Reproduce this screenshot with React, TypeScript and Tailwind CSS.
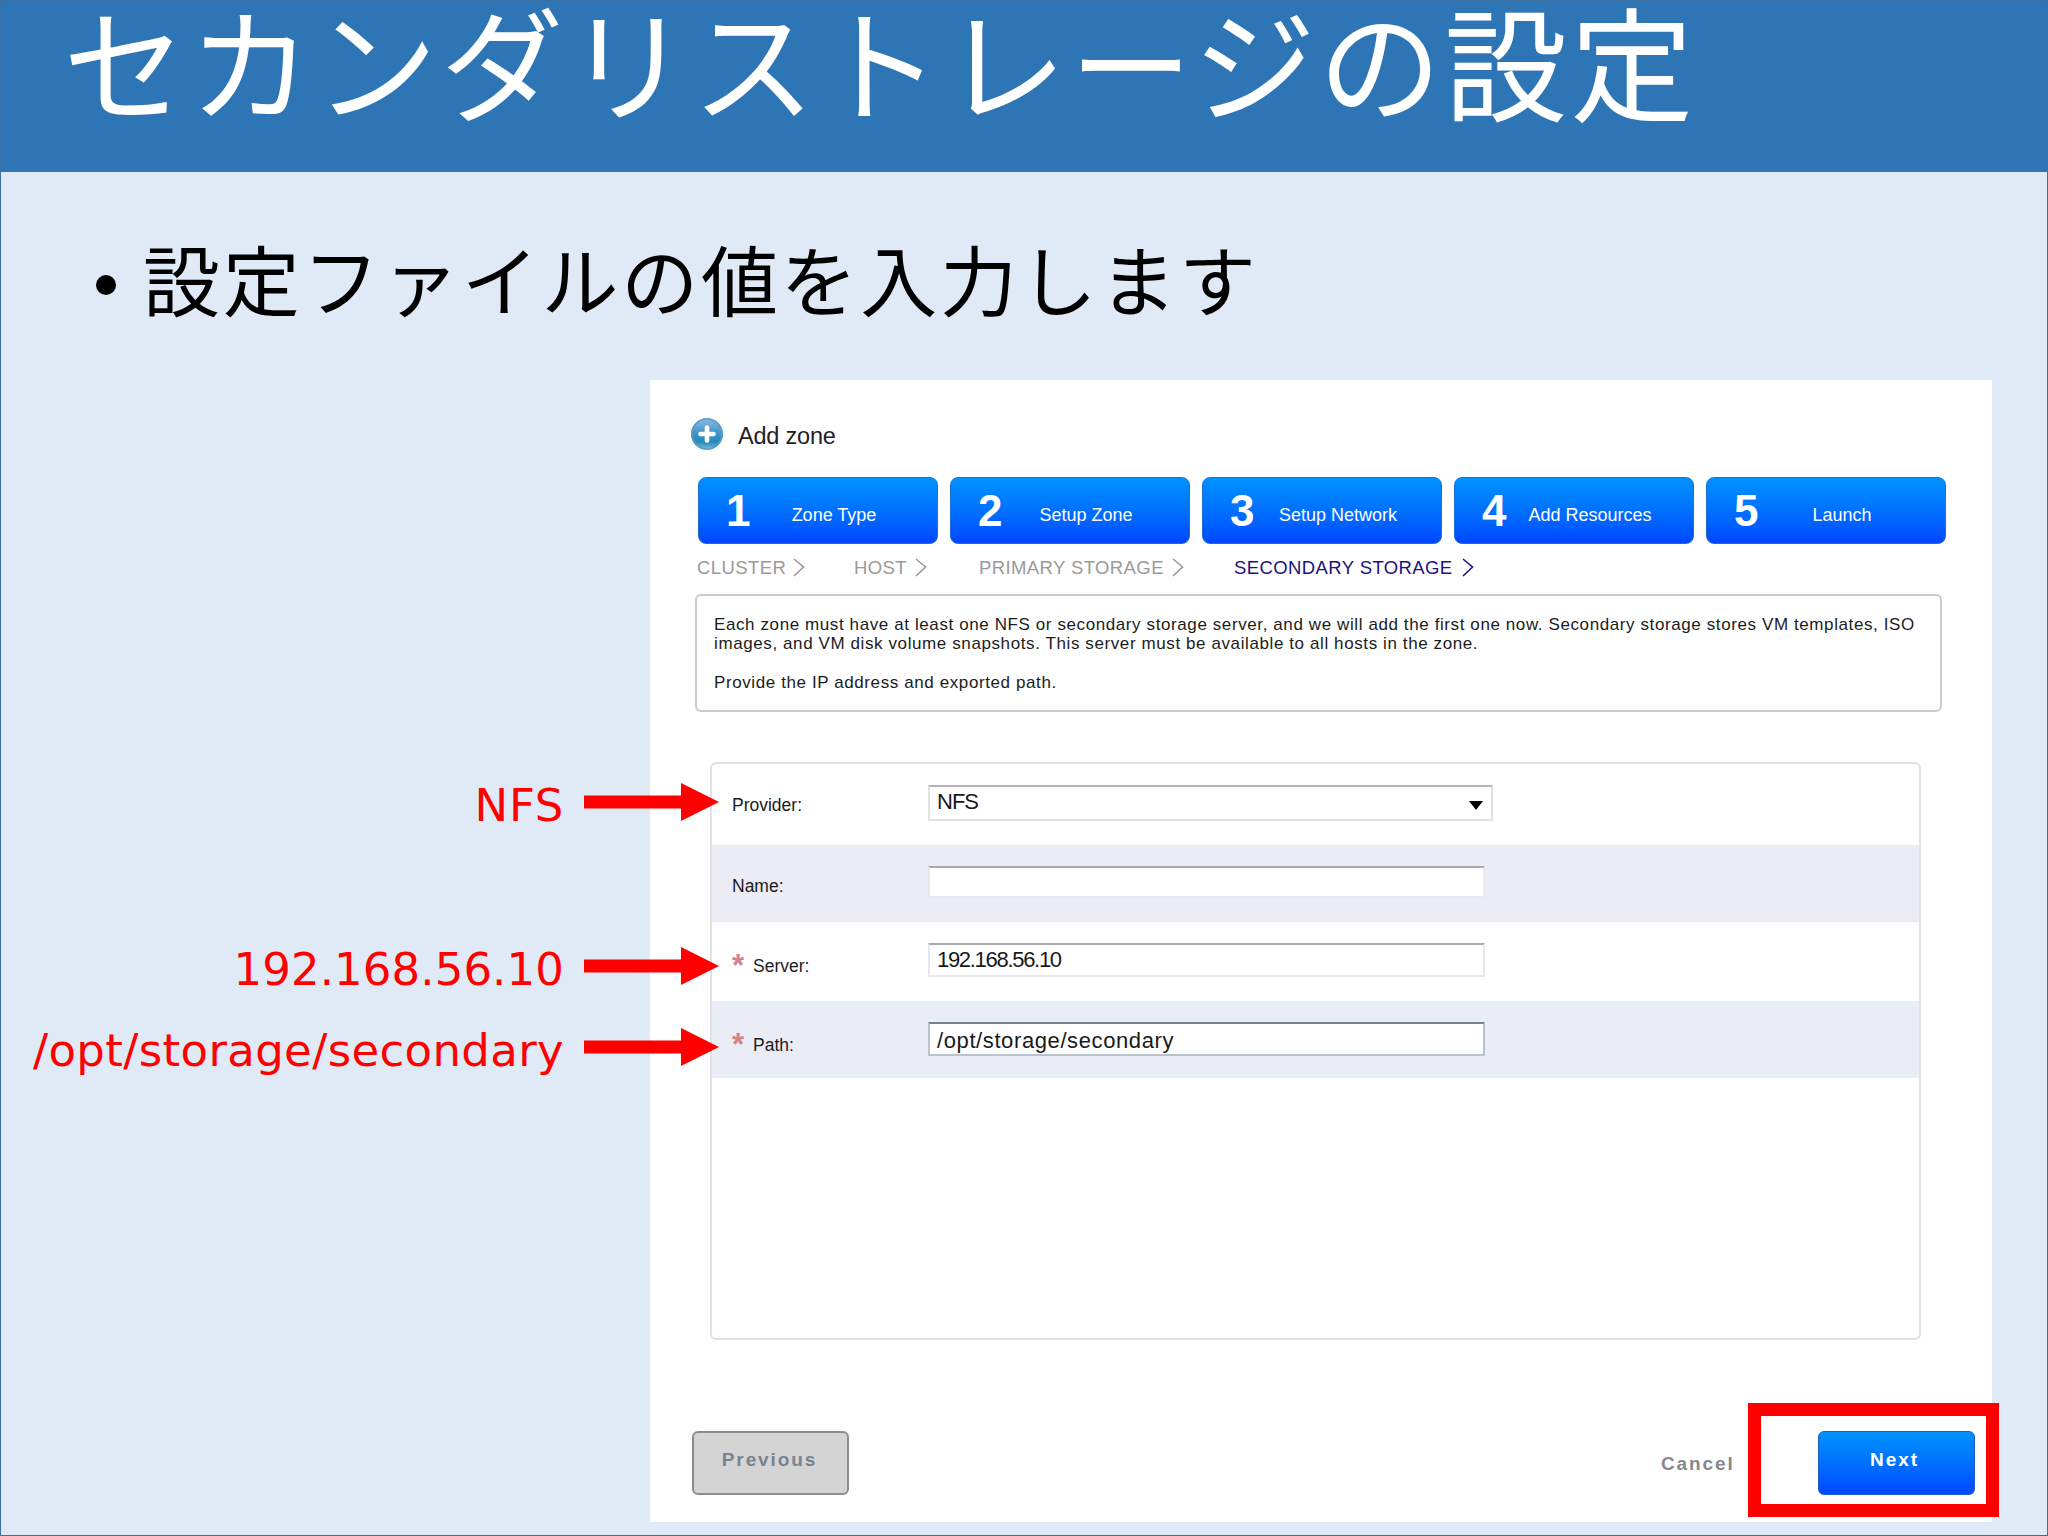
import clsx from "clsx";

type Crumb = {
  label: string;
  width: string;
  gap: string;
  active?: boolean;
};

type Field = {
  label: string;
  value: string;
  rowClass: string;
  inputClass: string;
  required?: boolean;
  select?: boolean;
};

const steps = [
  "Zone Type",
  "Setup Zone",
  "Setup Network",
  "Add Resources",
  "Launch",
];

const crumbs: Crumb[] = [
  { label: "CLUSTER", width: "w-[157px]", gap: "gap-[7px]" },
  { label: "HOST", width: "w-[125px]", gap: "gap-[8px]" },
  {
    label: "PRIMARY STORAGE",
    width: "w-[255px]",
    gap: "gap-[8px]",
  },
  {
    label: "SECONDARY STORAGE",
    width: "w-[260px]",
    gap: "gap-[9px]",
    active: true,
  },
];

const fields: Field[] = [
  {
    label: "Provider:",
    value: "NFS",
    select: true,
    rowClass: "h-[81px] pt-[21px]",
    inputClass:
      "h-9 w-[565px] border-2 border-[#e4e1e6] border-t-[#b5b3b6] pb-[2px] tracking-[-1px]",
  },
  {
    label: "Name:",
    value: "",
    rowClass: "h-[77px] pt-[21px] bg-[#ebecf4]",
    inputClass: "h-8 w-[557px] border-2 border-[#e9e9ef] border-t-[#aaaab2]",
  },
  {
    label: "Server:",
    value: "192.168.56.10",
    required: true,
    rowClass: "h-[79px] pt-[21px]",
    inputClass:
      "h-[34px] w-[557px] border-2 border-[#e8e7eb] border-t-[#aaa9ae] tracking-[-1.3px]",
  },
  {
    label: "Path:",
    value: "/opt/storage/secondary",
    required: true,
    rowClass: "h-[77px] pt-[21px] bg-[#ebedf6]",
    inputClass:
      "h-[34px] w-[557px] border-2 border-[#b9c3cf] border-t-[#75818f] pt-[3px] tracking-[0.6px]",
  },
];

const notes = [
  { text: "NFS", rowClass: "mt-[423px] tracking-[0.7px]" },
  { text: "192.168.56.10", rowClass: "mt-[104px] tracking-[0.1px]" },
  { text: "/opt/storage/secondary", rowClass: "mt-[21px] tracking-[0.35px]" },
];

const PlusIcon = () => (
  <svg className="size-[34px]" viewBox="0 0 34 34">
    <defs>
      <linearGradient id="plus-fill" x1="0" y1="0" x2="0" y2="1">
        <stop offset="0" stopColor="#8cbce4" />
        <stop offset="0.5" stopColor="#3f93c8" />
        <stop offset="0.75" stopColor="#2689b8" />
        <stop offset="1" stopColor="#7cc4e2" />
      </linearGradient>
    </defs>
    <circle cx="17" cy="17" r="16" fill="url(#plus-fill)" />
    <circle cx="17" cy="17" r="15" fill="none" stroke="#5b9cc6" strokeWidth="1.5" />
    <path d="M17 10.5v13M10.5 17h13" stroke="#fff" strokeWidth="4.6" strokeLinecap="round" />
  </svg>
);

const Chevron = () => (
  <svg className="h-[19px] w-3 shrink-0" viewBox="0 0 12 19">
    <path d="M1 1l9.5 8L1 18" fill="none" stroke="currentColor" strokeWidth="1.6" />
  </svg>
);

const Arrow = () => (
  <svg className="absolute left-[583px] top-[9px] z-10 h-[38px] w-[136px]" viewBox="0 0 136 38">
    <path d="M0 12.5h97V0l38 19-38 19V25.5H0z" fill="#ff0000" />
  </svg>
);

const FieldRow = ({ label, value, required, select, rowClass, inputClass }: Field) => (
  <div className={clsx("flex items-start", rowClass)}>
    <div className="flex h-9 w-[216px] items-center pl-5 text-[17.5px] text-[#1b1b1f]">
      {required && (
        <span className="-mt-1 w-[21px] text-[31px] font-bold leading-none text-[#d4808a]">
          <span className="relative top-[6px]">*</span>
        </span>
      )}
      <span className={clsx("relative", required ? "top-[5px]" : "top-[2px]")}>{label}</span>
    </div>
    <div
      className={clsx(
        "flex items-center justify-between bg-white pl-[7px] text-[22px] leading-none text-[#1a1a1a]",
        inputClass
      )}
    >
      <span>{value}</span>
      {select && (
        <svg className="mr-2 mt-[6px] h-[9px] w-[14px]" viewBox="0 0 14 9">
          <path d="M0 0h14L7 9z" fill="#000" />
        </svg>
      )}
    </div>
  </div>
);

const ZoneWizard = () => (
  <div className="relative mt-[207px] h-[1142px] w-[1342px] bg-[#fefefe] pl-[45px] font-['Liberation_Sans',sans-serif]">
    <div className="flex h-[108px] items-center">
      <span className="-ml-[5px]">
        <PlusIcon />
      </span>
      <span className="ml-[14px] mt-[5px] text-[23.5px] tracking-[-0.2px] text-[#222]">
        Add zone
      </span>
    </div>

    <div className="-mt-[11px] ml-[3px] grid w-[1248px] grid-cols-5 gap-3">
      {steps.map((step, i) => (
        <div
          key={step}
          className="flex h-[67px] items-center rounded-lg border border-[#1a6fd8] bg-linear-to-b from-[#0092ff] to-[#0046ff] text-white"
        >
          <span className="w-[55px] pl-[27px] text-[44px] font-bold leading-none">{i + 1}</span>
          <span className="mt-[9px] w-40 text-center text-lg leading-none">{step}</span>
        </div>
      ))}
    </div>

    <div className="ml-[2px] mt-[13px] flex h-5 items-center text-[18.5px]">
      {crumbs.map((crumb) => (
        <div
          key={crumb.label}
          className={clsx(
            "flex items-center whitespace-nowrap tracking-[0.4px]",
            crumb.width,
            crumb.gap,
            crumb.active ? "text-[#22137a]" : "text-[#9b999c]"
          )}
        >
          <span className="mt-[3px] leading-none">{crumb.label}</span>
          <Chevron />
        </div>
      ))}
    </div>

    <div className="mt-[17px] h-[118px] w-[1247px] rounded-md border-2 border-[#cccacd] pl-[17px] pt-[19px] text-[17px] leading-[19.3px] tracking-[0.6px] text-[#1c1c1c]">
      <p className="whitespace-nowrap">
        Each zone must have at least one NFS or secondary storage server, and we will add the first
        one now. Secondary storage stores VM templates, ISO
      </p>
      <p className="whitespace-nowrap">
        images, and VM disk volume snapshots. This server must be available to all hosts in the zone.
      </p>
      <p className="mt-[19px]">Provide the IP address and exported path.</p>
    </div>

    <div className="ml-[15px] mt-[50px] h-[578px] w-[1211px] rounded-md border-2 border-[#e3e1e7]">
      {fields.map((field) => (
        <FieldRow key={field.label} {...field} />
      ))}
    </div>

    <div className="-ml-[3px] mt-[91px] flex h-16 text-[19px] font-bold tracking-[1.9px]">
      <button className="h-16 w-[157px] rounded-md border-2 border-[#8d8b8d] bg-[#d5d4d5] pb-[6px] pr-[2px] text-[#788490]">
        Previous
      </button>
      <button className="ml-[812px] w-[76px] pt-[3px] text-left text-[#88878a]">Cancel</button>
      <button className="ml-[81px] h-16 w-[157px] rounded-md border border-[#1a5fc8] bg-linear-to-b from-[#0092ff] to-[#0046ff] pb-[6px] pr-1 text-white">
        Next
      </button>
    </div>

    {/* highlight around the Next button */}
    <div className="absolute left-[1098px] top-[1023px] h-[114px] w-[251px] border-[13px] border-[#ff0000]" />
  </div>
);

export default function App() {
  return (
    <div className="h-[1536px] w-[2048px] border border-[#3b6ea3] bg-[#e0eaf6]">
      <header className="h-[171px] border-b border-[#41719c] bg-[#2e75b6] pl-[62px]">
        <h1 className="whitespace-nowrap font-['Noto_Sans_CJK_JP',sans-serif] text-[123px] leading-[115px] tracking-[2.8px] text-white">
          セカンダリストレージの設定
        </h1>
      </header>

      <main className="flex pt-px">
        <section className="relative w-[649px] shrink-0">
          <div className="absolute left-[95px] top-[65px] flex items-center gap-[27px] whitespace-nowrap font-['Noto_Sans_CJK_JP',sans-serif] text-[77px] leading-[80px] tracking-[2.7px] text-black">
            <span className="mt-[14px] size-5 rounded-full bg-black" />
            設定ファイルの値を入力します
          </div>
          <div className="pt-[178px]">
            {notes.map((note) => (
              <div key={note.text} className={clsx("relative h-[60px]", note.rowClass)}>
                <p className="w-[563px] text-right font-['DejaVu_Sans',sans-serif] text-[45px] leading-[64px] text-[#ff0000]">
                  {note.text}
                </p>
                <Arrow />
              </div>
            ))}
          </div>
        </section>

        <ZoneWizard />
      </main>
    </div>
  );
}
